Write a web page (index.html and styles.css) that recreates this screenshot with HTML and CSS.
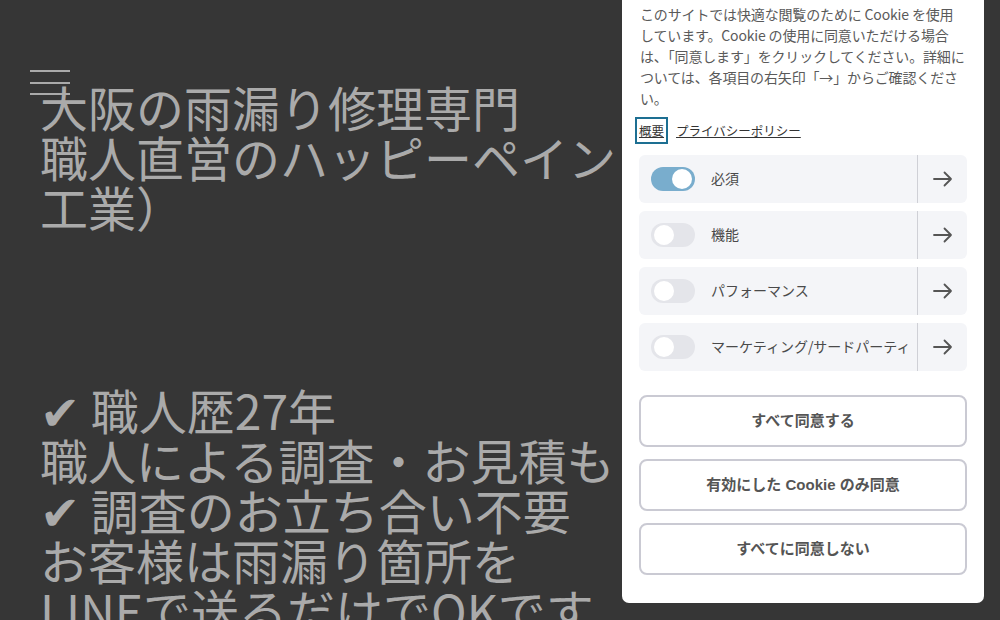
FILE: index.html
```html
<!DOCTYPE html>
<html lang="ja">
<head>
  <meta charset="UTF-8">
  <title>大阪の雨漏り修理専門</title>
  <link rel="stylesheet" href="styles.css">
</head>
<body>
  <button class="menu-btn" aria-label="メニュー">
    <span></span><span></span><span></span>
  </button>

  <main class="hero">
    <h1 class="hero-title">大阪の雨漏り修理専門<br>職人直営のハッピーペイント<br>工業）</h1>
    <p class="hero-points">✔ 職人歴27年<br>職人による調査・お見積も<br>✔ 調査のお立ち合い不要<br>お客様は雨漏り箇所を<br>LINEで送るだけでOKです</p>
  </main>

  <aside class="cookie-panel">
    <p class="cookie-text">このサイトでは快適な閲覧のために Cookie を使用<br>しています。Cookie の使用に同意いただける場合<br>は、「同意します」をクリックしてください。詳細に<br>ついては、各項目の右矢印「→」からご確認くださ<br>い。</p>
    <div class="cookie-links">
      <a href="#" class="tab active">概要</a>
      <a href="#" class="tab">プライバシーポリシー</a>
    </div>

    <div class="cat-list">
      <div class="cat">
        <span class="toggle on"><span class="knob"></span></span>
        <span class="cat-name">必須</span>
        <span class="cat-more">
          <svg width="20" height="16" viewBox="0 0 20 16"><path d="M1 8 H18 M11.5 1.5 L18 8 L11.5 14.5" fill="none" stroke="#555" stroke-width="1.8" stroke-linecap="round" stroke-linejoin="round"/></svg>
        </span>
      </div>
      <div class="cat">
        <span class="toggle"><span class="knob"></span></span>
        <span class="cat-name">機能</span>
        <span class="cat-more">
          <svg width="20" height="16" viewBox="0 0 20 16"><path d="M1 8 H18 M11.5 1.5 L18 8 L11.5 14.5" fill="none" stroke="#555" stroke-width="1.8" stroke-linecap="round" stroke-linejoin="round"/></svg>
        </span>
      </div>
      <div class="cat">
        <span class="toggle"><span class="knob"></span></span>
        <span class="cat-name">パフォーマンス</span>
        <span class="cat-more">
          <svg width="20" height="16" viewBox="0 0 20 16"><path d="M1 8 H18 M11.5 1.5 L18 8 L11.5 14.5" fill="none" stroke="#555" stroke-width="1.8" stroke-linecap="round" stroke-linejoin="round"/></svg>
        </span>
      </div>
      <div class="cat">
        <span class="toggle"><span class="knob"></span></span>
        <span class="cat-name">マーケティング/サードパーティ</span>
        <span class="cat-more">
          <svg width="20" height="16" viewBox="0 0 20 16"><path d="M1 8 H18 M11.5 1.5 L18 8 L11.5 14.5" fill="none" stroke="#555" stroke-width="1.8" stroke-linecap="round" stroke-linejoin="round"/></svg>
        </span>
      </div>
    </div>

    <div class="cookie-actions">
      <button type="button" class="cookie-btn">すべて同意する</button>
      <button type="button" class="cookie-btn">有効にした Cookie のみ同意</button>
      <button type="button" class="cookie-btn">すべてに同意しない</button>
    </div>
  </aside>
</body>
</html>
```

FILE: styles.css
```css
html, body {
  height: 100%;
}
body {
  margin: 0;
  background: #363636;
  color: #aaaaaa;
  font-family: "Noto Sans CJK JP", "Noto Sans", sans-serif;
  overflow: hidden;
}
.menu-btn {
  position: absolute;
  left: 30px;
  top: 70px;
  width: 40px;
  height: 25px;
  padding: 0;
  border: none;
  background: none;
  display: flex;
  flex-direction: column;
  justify-content: space-between;
}
.menu-btn span {
  display: block;
  height: 2px;
  background: #aaaaaa;
}
.hero {
  padding: 81px 0 0 40px;
  white-space: nowrap;
}
.hero-title,
.hero-points {
  margin: 0;
  font-size: 48px;
  line-height: 50px;
  font-weight: normal;
}
.hero-points {
  margin-top: 153px;
}

/* cookie panel */
.cookie-panel {
  position: fixed;
  top: -11px;
  left: 622px;
  width: 362px;
  box-sizing: border-box;
  padding: 15px 17px 28px 17px;
  background: #fff;
  border-radius: 0 0 7px 7px;
  color: #5a5a5a;
}
.cookie-text {
  margin: 0 0 0 1px;
  font-size: 14px;
  line-height: 21px;
  white-space: nowrap;
  letter-spacing: -0.15px;
}
.cookie-links {
  display: flex;
  align-items: center;
  gap: 12px;
  margin-top: 9px;
  height: 24px;
}
.tab {
  font-size: 12.5px;
  color: #333;
  text-decoration: underline;
}
.tab.active {
  outline: 2px solid #1d6f92;
  outline-offset: 2px;
}
.cat-list {
  display: flex;
  flex-direction: column;
  gap: 8px;
  margin-top: 13px;
}
.cat {
  display: flex;
  align-items: center;
  height: 48px;
  background: #f4f5f8;
  border-radius: 6px;
  padding-left: 12px;
}
.toggle {
  width: 44px;
  height: 24px;
  border-radius: 12px;
  background: #e4e5ea;
  position: relative;
  flex: none;
}
.toggle .knob {
  position: absolute;
  top: 2px;
  left: 3px;
  width: 20px;
  height: 20px;
  border-radius: 50%;
  background: #fff;
}
.toggle.on {
  background: #79adcd;
}
.toggle.on .knob {
  left: auto;
  right: 3px;
}
.cat-name {
  flex: 1;
  margin-left: 16px;
  padding-bottom: 3px;
  font-size: 14px;
  color: #4a4a4a;
  white-space: nowrap;
}
.cat-more {
  align-self: stretch;
  width: 49px;
  border-left: 1px solid #cfd0d6;
  display: flex;
  align-items: center;
  justify-content: center;
}
.cookie-actions {
  display: flex;
  flex-direction: column;
  gap: 12px;
  margin-top: 24px;
}
.cookie-btn {
  height: 52px;
  padding-bottom: 4px;
  background: #fff;
  border: 2px solid #cacad3;
  border-radius: 8px;
  font-family: "Liberation Sans", "Noto Sans CJK JP", sans-serif;
  font-size: 15px;
  font-weight: bold;
  color: #555;
}
```
